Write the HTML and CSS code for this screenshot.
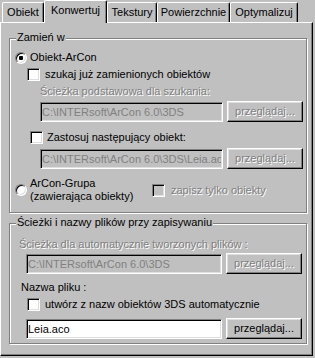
FILE: index.html
```html
<!DOCTYPE html>
<html lang="pl">
<head>
  <meta charset="UTF-8" />
  <title>Konwertuj</title>
  <link rel="stylesheet" href="styles.css">
</head>
<body>

  <div class="tabs">
    <div class="tab t-obiekt">Obiekt</div>
    <div class="tab active t-konw">Konwertuj</div>
    <div class="tab t-tekst">Tekstury</div>
    <div class="tab t-pow">Powierzchnie</div>
    <div class="tab t-opt">Optymalizuj</div>
  </div>

  <div class="panel">

    <div class="group group-zamien">
      <span class="legend">Zamień w</span>

      <label class="row r-obiekt"><input type="radio" name="cel" checked> Obiekt-ArCon</label>
      <label class="row r-szukaj"><input type="checkbox"> szukaj już zamienionych obiektów</label>
      <div class="off hint1">Ścieżka podstawowa dla szukania:</div>
      <div class="row path-row p1">
        <input class="field" type="text" value="C:\INTERsoft\ArCon 6.0\3DS" disabled>
        <button class="btn" disabled>przeglądaj...</button>
      </div>

      <label class="row r-zastosuj"><input type="checkbox"> Zastosuj następujący obiekt:</label>
      <div class="row path-row p2">
        <input class="field" type="text" value="C:\INTERsoft\ArCon 6.0\3DS\Leia.aco" disabled>
        <button class="btn" disabled>przeglądaj...</button>
      </div>

      <div class="row grupa-row">
        <label class="row r-grupa"><input type="radio" name="cel"> <span>ArCon-Grupa<br>(zawierająca obiekty)</span></label>
        <label class="row r-tylko off"><input type="checkbox" disabled> zapisz tylko obiekty</label>
      </div>
    </div>

    <div class="group group-sciezki">
      <span class="legend">Ścieżki i nazwy plików przy zapisywaniu</span>

      <div class="off hint2">Ścieżka dla automatycznie tworzonych plików :</div>
      <div class="row path-row p3">
        <input class="field" type="text" value="C:\INTERsoft\ArCon 6.0\3DS" disabled>
        <button class="btn" disabled>przeglądaj...</button>
      </div>

      <div class="nazwa">Nazwa pliku :</div>
      <label class="row r-utworz"><input type="checkbox"> utwórz z nazw obiektów 3DS automatycznie</label>
      <div class="row path-row p4">
        <input class="field on" type="text" value="Leia.aco">
        <button class="btn">przeglądaj...</button>
      </div>
    </div>

  </div>

</body>
</html>
```

FILE: styles.css
```css
* {
  box-sizing: border-box;
}
body {
  margin: 0;
  width: 315px;
  height: 358px;
  overflow: hidden;
  background: #c0c0c0;
  color: #000;
  font: 11px/13px "Liberation Sans", Arial, sans-serif;
}

/* onglets */
.tabs {
  display: flex;
  align-items: flex-end;
  height: 22px;
  padding-left: 2px;
}
.tab {
  height: 20px;
  padding-top: 3px;
  text-align: center;
  white-space: nowrap;
  border: 1px solid;
  border-color: #fff #000 transparent #fff;
  border-bottom: 0;
  border-radius: 2px 2px 0 0;
  box-shadow: inset -1px 0 #808080;
}
.tab.active {
  height: 23px;
  margin-bottom: -1px;
  position: relative;
  z-index: 1;
  background: #c0c0c0;
}
.t-obiekt { width: 42px; }
.t-konw { width: 63px; }
.t-tekst { width: 50px; }
.t-pow { width: 73px; }
.t-opt { width: 68px; }

.panel {
  width: 313px;
  height: 334px;
  padding: 0 5px 0 8px;
  display: flex;
  flex-direction: column;
  border: 1px solid;
  border-color: #fff #000 #000 #fff;
  box-shadow: inset -1px -1px #808080;
}

/* cadres */
.group {
  display: flex;
  flex-direction: column;
  align-items: flex-start;
  border: 1px solid #808080;
  box-shadow: inset 1px 1px #fff, 1px 1px #fff;
}
.group-zamien {
  margin-top: 15px;
  height: 175px;
}
.group-sciezki {
  margin-top: 10px;
  height: 121px;
}
.legend {
  margin: -8px 0 0 6px;
  padding: 0 1px;
  background: #c0c0c0;
}

.row {
  display: flex;
  align-items: center;
}
.off {
  color: #808080;
  text-shadow: 1px 1px #fff;
}

/* lignes du premier cadre */
.r-obiekt { margin: 7px 0 0 5px; gap: 3px; }
.r-szukaj { margin: 4px 0 0 17px; gap: 5px; }
.hint1 { margin: 4px 0 0 30px; }
.p1 { margin: 3px 0 0 30px; }
.r-zastosuj { margin: 9px 0 0 20px; gap: 4px; }
.p2 { margin: 4px 0 0 30px; }
.grupa-row { margin-top: 8px; }
.r-grupa { margin-left: 5px; width: 137px; gap: 3px; }
.r-tylko { gap: 6px; }

/* lignes du second cadre */
.hint2 { margin: 9px 0 0 9px; }
.p3 { margin: 2px 0 0 16px; }
.nazwa { margin: 7px 0 0 11px; }
.r-utworz { margin: 4px 0 0 17px; gap: 5px; }
.p4 { margin: 7px 0 0 16px; }

.path-row {
  align-items: flex-start;
  gap: 4px;
}
.p1 .field, .p2 .field { width: 183px; }
.p3 .field, .p4 .field { width: 196px; }

.field {
  height: 20px;
  margin: 1px 0 0 0;
  padding: 0 1px;
  font: inherit;
  color: #000;
  background: #fff;
  border: 1px solid;
  border-color: #808080 #fff #fff #808080;
  box-shadow: inset 1px 1px #000, inset -1px -1px #dfdfdf;
  outline: none;
}
.field:disabled {
  color: #808080;
  background: #c0c0c0;
}

.btn {
  width: 76px;
  height: 21px;
  padding: 0;
  font: inherit;
  color: #000;
  background: #c0c0c0;
  border: 1px solid;
  border-color: #fff #000 #000 #fff;
  box-shadow: inset -1px -1px #808080, inset 1px 1px #dfdfdf;
}
.btn:disabled {
  color: #808080;
  text-shadow: 1px 1px #fff;
}

input[type="checkbox"], input[type="radio"] {
  appearance: none;
  -webkit-appearance: none;
  flex: none;
  margin: 0;
  background: #fff;
  border: 1px solid;
  border-color: #808080 #fff #fff #808080;
  box-shadow: inset 1px 1px #000, inset -1px -1px #dfdfdf;
}
input[type="checkbox"] {
  width: 13px;
  height: 13px;
}
input[type="checkbox"]:disabled {
  background: #c0c0c0;
}
input[type="radio"] {
  width: 12px;
  height: 12px;
  border-radius: 50%;
}
input[type="radio"]:checked {
  background: radial-gradient(circle, #000 0 2px, #fff 2.5px);
}
```
